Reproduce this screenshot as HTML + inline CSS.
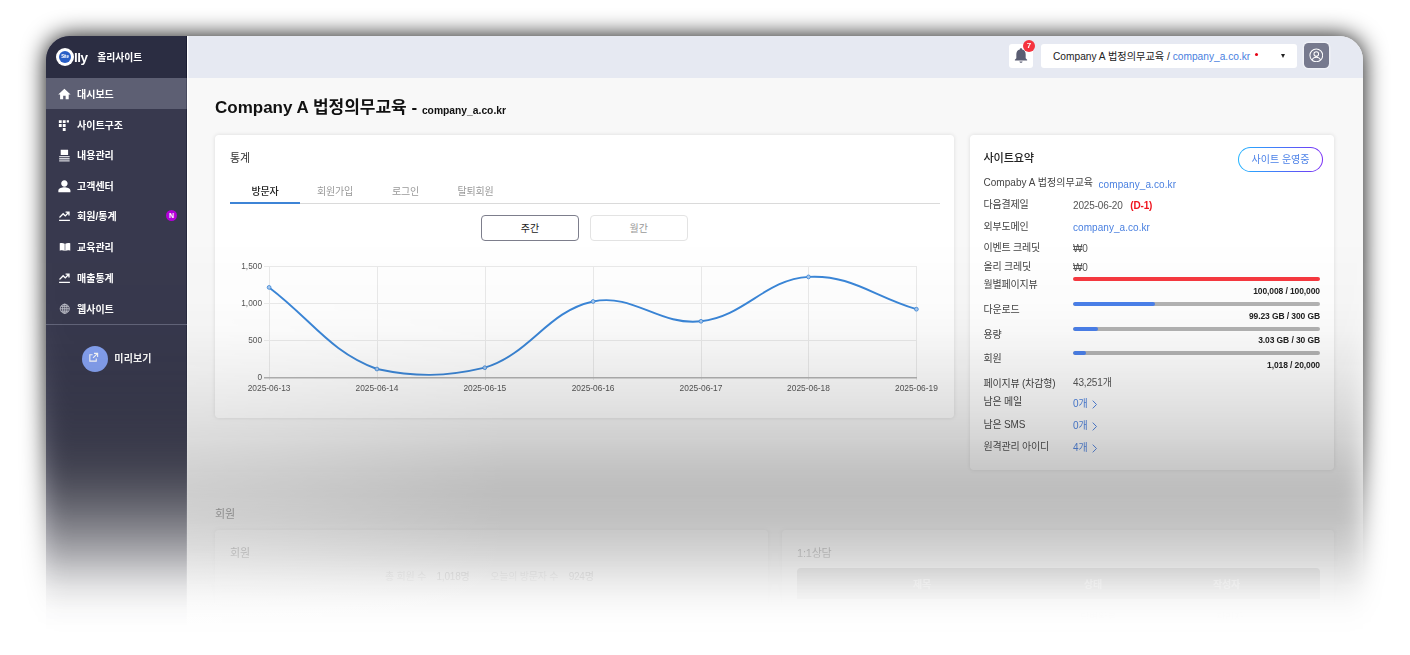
<!DOCTYPE html>
<html lang="ko">
<head>
<meta charset="utf-8">
<title>올리사이트 대시보드</title>
<style>
*{box-sizing:border-box;margin:0;padding:0}
html,body{width:1410px;height:655px;overflow:hidden;background:#fff}
body{position:relative;font-family:"Liberation Sans","Noto Sans CJK KR",sans-serif;color:#222;-webkit-font-smoothing:antialiased}
.abs{position:absolute}
#frame{position:absolute;left:46px;top:36px;width:1317px;height:700px;border-radius:24px 24px 0 0;background:#f8f8f8}
#clip{position:absolute;left:0;top:0;width:1317px;height:700px;border-radius:24px 24px 0 0;overflow:hidden}
/* sidebar */
#side{position:absolute;z-index:2;left:0;top:0;width:141px;box-shadow:inset -1px 0 0 rgba(10,12,35,.35);height:700px;background:#38394e}
#logo{position:absolute;left:0;top:0;width:141px;box-shadow:inset -1px 0 0 rgba(10,12,35,.5);height:42px;background:#2b2d42}
.mi{position:absolute;left:0;width:141px;height:31px;color:#fff;font-weight:700;font-size:10px;line-height:31px;white-space:nowrap}
.mi.on{background:#5d5f73;box-shadow:inset -1px 0 0 rgba(10,12,35,.25)}
.mi span{position:absolute;left:31px;top:.5px}
.mi svg{position:absolute;left:11px;top:8.600px;width:14.800px;height:14.800px;fill:#fff}
/* header */
#head{position:absolute;left:140px;top:0;width:1177px;height:42px;background:#e6e9f2;box-shadow:inset 2.300px 0 0 #fff}
/* content */
#main{position:absolute;left:140px;top:42px;width:1177px;height:658px;background:#f8f8f8;box-shadow:inset 2.300px 0 0 #fff}
.card{position:absolute;background:#fff;border-radius:4px;box-shadow:0 0 4px rgba(0,0,0,.12)}
.lbl{position:absolute;font-size:10px;letter-spacing:-.2px;color:#444;white-space:nowrap;line-height:14px;margin-top:.6px}
.val{position:absolute;font-size:10px;letter-spacing:-.15px;color:#555;white-space:nowrap;line-height:14px;margin-top:.3px}
.val.blue{font-size:10px;letter-spacing:.05px;margin-top:.8px}
.blue{color:#4a80e0}
.bar{position:absolute;left:1073px;width:247px;height:4px;border-radius:2px;background:#b3b3b3;overflow:hidden;margin-top:-.4px}
.bar i{position:absolute;left:0;top:0;height:4px;border-radius:2px;background:#4a80ea}
.num{position:absolute;right:90px;font-size:8.5px;font-weight:700;color:#222;white-space:nowrap;line-height:10px;margin-top:-.9px;letter-spacing:-.1px}
.tab{position:absolute;top:183.500px;width:70px;text-align:center;font-size:10px;letter-spacing:-.2px;color:#999;line-height:16px}

.fademask{-webkit-mask-image:linear-gradient(to bottom,rgba(0,0,0,1) 240px,rgba(0,0,0,0.992) 270px,rgba(0,0,0,0.99) 300px,rgba(0,0,0,0.972) 330px,rgba(0,0,0,0.925) 367px,rgba(0,0,0,0.87) 400px,rgba(0,0,0,0.83) 420px,rgba(0,0,0,0.78) 440px,rgba(0,0,0,0.68) 465px,rgba(0,0,0,0.54) 490px,rgba(0,0,0,0.38) 520px,rgba(0,0,0,0.24) 548px,rgba(0,0,0,0.13) 570px,rgba(0,0,0,0.05) 590px,rgba(0,0,0,0.012) 610px,rgba(0,0,0,0) 628px);mask-image:linear-gradient(to bottom,rgba(0,0,0,1) 240px,rgba(0,0,0,0.992) 270px,rgba(0,0,0,0.99) 300px,rgba(0,0,0,0.972) 330px,rgba(0,0,0,0.925) 367px,rgba(0,0,0,0.87) 400px,rgba(0,0,0,0.83) 420px,rgba(0,0,0,0.78) 440px,rgba(0,0,0,0.68) 465px,rgba(0,0,0,0.54) 490px,rgba(0,0,0,0.38) 520px,rgba(0,0,0,0.24) 548px,rgba(0,0,0,0.13) 570px,rgba(0,0,0,0.05) 590px,rgba(0,0,0,0.012) 610px,rgba(0,0,0,0) 628px);-webkit-mask-size:100% 655px;mask-size:100% 655px;-webkit-mask-repeat:no-repeat;mask-repeat:no-repeat}
#shadow{position:absolute;left:-60px;top:-60px;width:1530px;height:775px;filter:blur(11.5px)}
#shadow i{position:absolute;left:0;top:0;width:1530px;height:775px;-webkit-mask-position:0 60px;mask-position:0 60px}
#shadow b{position:absolute;left:106px;top:96px;width:1317px;height:660px;border-radius:24px 24px 0 0;background:rgba(0,0,0,.96)}
#screen{position:absolute;left:0;top:0;width:1410px;height:655px}
svg text{font-family:"Liberation Sans","Noto Sans CJK KR",sans-serif}
</style>
</head>
<body>
<div id="shadow"><i class="fademask"><b></b></i></div>
<div class="abs" id="lighten" style="left:186px;top:200px;width:330px;height:455px;background:linear-gradient(to right,rgba(255,255,255,.28),rgba(255,255,255,.2) 100px,rgba(255,255,255,.09) 220px,rgba(255,255,255,0) 320px)"></div>
<div id="screen" class="fademask">
<div id="frame"><div id="clip">

<!-- SIDEBAR -->
<div id="side">
  <div id="logo">
    <div class="abs" style="left:10px;top:11.500px;width:18px;height:18px;border-radius:50%;background:#fff"></div>
    <div class="abs" style="left:13px;top:14.500px;width:12px;height:12px;border-radius:50%;background:#2a5fc6;color:#fff;font-size:4.500px;font-weight:700;line-height:12px;text-align:center;letter-spacing:-.2px">Site</div>
    <div class="abs" style="left:28px;top:14.700px;color:#fff;font-weight:700;font-size:13.500px;line-height:13.500px;letter-spacing:-.5px">lly</div>
    <div class="abs" style="left:51.200px;top:13.500px;color:#fff;font-weight:700;font-size:9.800px;line-height:16px;white-space:nowrap">올리사이트</div>
  </div>
  <div class="mi on" style="top:42px"><svg viewBox="0 0 24 24"><path d="M10 20v-6h4v6h5v-8h3L12 3 2 12h3v8z"/></svg><span>대시보드</span></div>
  <div class="mi" style="top:73px"><svg viewBox="0 0 24 24"><path d="M3 3.500h4.600v4.600H3zM9.400 3.500h4.600v4.600H9.400zM15.800 3.500h3.600v3.600h-3.600zM3 9.900h4.600v4.600H3zM9.400 9.900h4.600v4.600H9.400zM9.400 16.300h4.600v4.600H9.400z"/></svg><span>사이트구조</span></div>
  <div class="mi" style="top:103px"><svg viewBox="0 0 24 24"><path d="M6 3h12v8.500H6z"/><path d="M3.500 13h17v2.200h-17zM3.500 16.400h17v2.200h-17zM3.500 19.800h17V22h-17z" fill="#d4d5dc"/></svg><span>내용관리</span></div>
  <div class="mi" style="top:134px"><svg viewBox="0 0 24 24"><path d="M12 12.500c3 0 5.200-2.400 5.200-5.300S15 2 12 2 6.800 4.300 6.800 7.200 9 12.500 12 12.500zm0 .8c-3.700 0-9.800 1.700-9.800 5.400V21.500h19.600v-2.800c0-3.700-6.100-5.400-9.800-5.400z"/></svg><span>고객센터</span></div>
  <div class="mi" style="top:164px"><svg viewBox="0 0 24 24" style="width:13px;height:13px;left:12px;top:9px"><path d="M2 20h20v2.200H2zM3.500 16.500l6-6 4 4L19 8.800V12h2.500V4.500H14V7h3.200l-3.700 4-4-4L2 14.800z"/></svg><span>회원/통계</span>
    <div class="abs" style="left:120px;top:10px;width:11px;height:11px;border-radius:50%;background:#b300d9;color:#fff;font-size:7px;line-height:11px;text-align:center;font-weight:700">N</div></div>
  <div class="mi" style="top:195px"><svg viewBox="0 0 24 24" style="width:12px;height:12px;left:12.500px;top:9.500px"><path d="M1.500 4.500c3.500-1.200 7-1 9.900.9v14.800C8.500 18.400 5 18.200 1.500 19.400zM22.500 4.500c-3.500-1.200-7-1-9.900.9v14.800c2.900-1.800 6.400-2 9.900-.8z"/></svg><span>교육관리</span></div>
  <div class="mi" style="top:226px"><svg viewBox="0 0 24 24" style="width:13px;height:13px;left:12px;top:9px"><path d="M2 20h20v2.200H2zM3.500 16.500l6-6 4 4L19 8.800V12h2.500V4.500H14V7h3.200l-3.700 4-4-4L2 14.800z"/></svg><span>매출통계</span></div>
  <div class="mi" style="top:257px"><svg viewBox="0 0 24 24" style="fill:none;stroke:#c9cad3;stroke-width:1.700;width:11.500px;height:11.500px;left:12.700px;top:10px"><circle cx="12" cy="12" r="9.500"/><ellipse cx="12" cy="12" rx="4.500" ry="9.500"/><path d="M2.500 12h19M4 7h16M4 17h16M12 2.500v19"/></svg><span>웹사이트</span></div>
  <div class="abs" style="left:0;top:288px;width:141px;height:1px;background:#62647a"></div>
  <div class="abs" style="left:35.700px;top:310px;width:26px;height:26px;border-radius:50%;background:#86a3f4"></div>
  <svg class="abs" style="left:42.300px;top:316.400px;width:11px;height:11px" viewBox="0 0 24 24" fill="none" stroke="#fff" stroke-width="2.400"><path d="M18 14v6H4V6h6M13 3h8v8M21 3l-10 10"/></svg>
  <div class="abs" style="left:68.300px;top:314px;color:#fff;font-weight:700;font-size:10px;letter-spacing:.15px;line-height:18px;white-space:nowrap">미리보기</div>
</div>

<!-- HEADER -->
<div id="head">
  <div class="abs" style="left:823px;top:8px;width:24px;height:24px;border-radius:3px;background:#fff"></div>
  <svg class="abs" style="left:827px;top:11px;width:16px;height:17px" viewBox="0 0 24 24" fill="#5a5d72"><path d="M12 23c1.200 0 2.200-.8 2.400-2H9.600c.2 1.200 1.200 2 2.400 2zM19 16v-6c0-3.400-2-6.200-5.200-6.900V2.500C13.800 1.600 13 1 12 1s-1.800.6-1.800 1.500v.6C7 3.800 5 6.600 5 10v6l-2.200 2.200V19.500h18.400v-1.300z"/></svg>
  <div class="abs" style="left:837px;top:4px;width:12px;height:12px;border-radius:50%;background:#f5333f;color:#fff;font-size:8px;font-weight:700;line-height:12px;text-align:center">7</div>
  <div class="abs" style="left:855px;top:8px;width:256px;height:24px;border-radius:3px;background:#fff"></div>
  <div class="abs" style="left:867px;top:13.600px;font-size:10.200px;line-height:14px;color:#222;white-space:nowrap"><span id="selt">Company A 법정의무교육 / </span><span class="blue" id="seld">company_a.co.kr</span></div>
  <div class="abs" style="left:1069px;top:16.700px;width:3px;height:3px;border-radius:50%;background:#e60012"></div>
  <div class="abs" style="left:1095.300px;top:18.300px;width:0;height:0;border-left:2.300px solid transparent;border-right:2.300px solid transparent;border-top:4px solid #222"></div>
  <div class="abs" style="left:1118px;top:7px;width:25px;height:25px;border-radius:4.500px;background:#777a8e;box-shadow:0 0 0 1.500px rgba(255,255,255,.4)"></div>
  <svg class="abs" style="left:1122.800px;top:11.900px;width:14.600px;height:14.600px" viewBox="0 0 24 24" fill="none" stroke="#fff" stroke-width="1.700"><circle cx="12" cy="12" r="10.500"/><circle cx="12" cy="10" r="3.800"/><path d="M5 19.500c1.500-3.200 4-4.300 7-4.300s5.500 1.100 7 4.300"/></svg>
</div>

<!-- MAIN -->
<div id="main"></div>

</div></div>

<!-- content positioned in page coordinates -->
<div id="content" class="abs" style="left:0;top:0;width:1410px;height:655px">
  <div class="abs" id="title" style="left:215px;top:94.300px;font-weight:700;font-size:17px;line-height:28px;color:#111;white-space:nowrap"><span id="t1">Company A 법정의무교육 -</span> <span id="t2" style="font-size:10.300px;position:relative;top:.6px">company_a.co.kr</span></div>

  <!-- stats card -->
  <div class="card" style="left:215px;top:135px;width:739px;height:283px"></div>
  <div class="lbl" style="left:230px;top:150px;font-size:11px;color:#333">통계</div>
  <div class="abs" style="left:230px;top:202.800px;width:710px;height:1.300px;background:#dadada"></div>
  <div class="abs" style="left:230px;top:202.200px;width:70px;height:1.800px;background:#3d84d6"></div>
  <div class="tab" style="left:230px;color:#222;font-weight:500">방문자</div>
  <div class="tab" style="left:300px">회원가입</div>
  <div class="tab" style="left:370.500px">로그인</div>
  <div class="tab" style="left:440.500px">탈퇴회원</div>
  <div class="abs" style="left:481px;top:215px;width:98px;height:25.500px;border:1px solid #7d7e8c;border-radius:4px;background:#fff;text-align:center;font-size:10px;line-height:25px;color:#222">주간</div>
  <div class="abs" style="left:589.500px;top:215px;width:98.500px;height:25.500px;border:1px solid #e3e3e3;border-radius:4px;background:#fff;text-align:center;font-size:10px;line-height:25px;color:#999">월간</div>

  <svg class="abs" style="left:0;top:0" width="1410" height="655" viewBox="0 0 1410 655">
    <g stroke="#eaeaea" stroke-width="1" shape-rendering="crispEdges">
      <path d="M264,266.500H916.500M264,303.500H916.500M264,340.500H916.500"/>
      <path d="M269.500,266V380M377,266V380M485,266V380M593,266V380M701,266V380M808.500,266V380M916.500,266V380"/>
    </g>
    <path d="M264,377.700H917" stroke="#b4b4b4" stroke-width="1.400" fill="none"/>
    <path d="M269.100,287.400 C312.200,320.000 328.900,351.100 376.900,369.000 C415.200,377.100 445.100,377.100 484.800,367.700 C531.500,353.100 546.700,311.500 593.100,301.500 C633.200,292.900 659.200,326.100 701.000,321.300 C745.300,316.200 764.700,279.400 808.500,276.900 C850.900,274.500 873.200,296.300 916.400,309.200" fill="none" stroke="#3a86d8" stroke-width="1.900"/>
    <g fill="#a9c8ee" stroke="#3a86d8" stroke-width=".8">
      <circle cx="269.100" cy="287.400" r="1.900"/><circle cx="376.900" cy="369" r="1.900"/><circle cx="484.800" cy="367.700" r="1.900"/><circle cx="593.100" cy="301.500" r="1.900"/><circle cx="701" cy="321.300" r="1.900"/><circle cx="808.500" cy="276.900" r="1.900"/><circle cx="916.400" cy="309.200" r="1.900"/>
    </g>
    <g font-size="8.300" fill="#555" text-anchor="end">
      <text x="262" y="268.600">1,500</text><text x="262" y="305.600">1,000</text><text x="262" y="342.800">500</text><text x="262" y="380">0</text>
    </g>
    <g font-size="8.400" fill="#555" text-anchor="middle">
      <text x="269.100" y="391">2025-06-13</text><text x="376.900" y="391">2025-06-14</text><text x="484.800" y="391">2025-06-15</text><text x="593.100" y="391">2025-06-16</text><text x="701" y="391">2025-06-17</text><text x="808.500" y="391">2025-06-18</text><text x="916.400" y="391">2025-06-19</text>
    </g>
  </svg>

  <!-- summary card -->
  <div class="card" style="left:970px;top:135px;width:364px;height:334.500px"></div>
  <div class="lbl" style="left:983.500px;top:150.500px;font-size:11.200px;font-weight:500;color:#222">사이트요약</div>
  <div class="abs" style="left:1238px;top:146.500px;width:85px;height:25.500px;border-radius:13px;background:linear-gradient(90deg,#22b4ff,#4a70f8 55%,#7c2ff6)"></div>
  <div class="abs" style="left:1239.300px;top:147.800px;width:82.400px;height:22.900px;border-radius:12px;background:#fff;text-align:center;font-size:10px;line-height:24px;color:#4a80e8">사이트 운영중</div>

  <div class="lbl" style="left:983.500px;top:175.500px;letter-spacing:.03px">Compaby A 법정의무교육</div><div class="val blue" style="left:1098.500px;top:177px;font-size:10px;letter-spacing:.1px">company_a.co.kr</div>
  <div class="lbl" style="left:983.500px;top:197.500px">다음결제일</div><div class="val" style="left:1073px;top:198.500px">2025-06-20 <span style="color:#f0141e;font-weight:700;margin-left:5px">(D-1)</span></div>
  <div class="lbl" style="left:983.500px;top:219.500px">외부도메인</div><div class="val blue" style="left:1073px;top:220.500px">company_a.co.kr</div>
  <div class="lbl" style="left:983.500px;top:240.500px">이벤트 크레딧</div><div class="val" style="left:1073px;top:241.500px">₩0</div>
  <div class="lbl" style="left:983.500px;top:259.500px">올리 크레딧</div><div class="val" style="left:1073px;top:260.500px">₩0</div>

  <div class="lbl" style="left:983.500px;top:277.500px">월별페이지뷰</div><div class="bar" style="top:277.500px;background:#f6383f"></div><div class="num" style="top:286.500px">100,008 / 100,000</div>
  <div class="lbl" style="left:983.500px;top:302px">다운로드</div><div class="bar" style="top:302.500px"><i style="width:81.500px"></i></div><div class="num" style="top:311.500px">99.23 GB / 300 GB</div>
  <div class="lbl" style="left:983.500px;top:327px">용량</div><div class="bar" style="top:327px"><i style="width:24.700px"></i></div><div class="num" style="top:336px">3.03 GB / 30 GB</div>
  <div class="lbl" style="left:983.500px;top:351px">회원</div><div class="bar" style="top:351.500px"><i style="width:12.700px"></i></div><div class="num" style="top:360.500px">1,018 / 20,000</div>

  <div class="lbl" style="left:983.500px;top:376px">페이지뷰 (차감형)</div><div class="val" style="left:1073px;top:376px">43,251개</div>
  <div class="lbl" style="left:983.500px;top:394.500px">남은 메일</div><div class="val blue" style="left:1073px;top:396px">0개 <svg class="chev" viewBox="0 0 6 10" width="5.400" height="9" style="margin-left:1.500px;vertical-align:-1.800px" fill="none" stroke="#4a80e0" stroke-width="1.100"><path d="M.8.700 5 5 .8 9.300"/></svg></div>
  <div class="lbl" style="left:983.500px;top:417px">남은 SMS</div><div class="val blue" style="left:1073px;top:418.500px">0개 <svg class="chev" viewBox="0 0 6 10" width="5.400" height="9" style="margin-left:1.500px;vertical-align:-1.800px" fill="none" stroke="#4a80e0" stroke-width="1.100"><path d="M.8.700 5 5 .8 9.300"/></svg></div>
  <div class="lbl" style="left:983.500px;top:439px">원격관리 아이디</div><div class="val blue" style="left:1073px;top:440.500px">4개 <svg class="chev" viewBox="0 0 6 10" width="5.400" height="9" style="margin-left:1.500px;vertical-align:-1.800px" fill="none" stroke="#4a80e0" stroke-width="1.100"><path d="M.8.700 5 5 .8 9.300"/></svg></div>

  <!-- lower section -->
  <div class="lbl" style="left:215px;top:506px;font-size:11px;color:#555">회원</div>
  <div class="card" style="left:215px;top:530px;width:553px;height:160px"></div>
  <div class="lbl" style="left:230px;top:545px;font-size:11px;color:#555">회원</div>
  <div class="lbl" style="left:385px;top:569px;font-size:10px;color:#999">총 회원 수 &nbsp;&nbsp;&nbsp;<span style="color:#555">1,018명</span> &nbsp;&nbsp;&nbsp;&nbsp;&nbsp;&nbsp; 오늘의 방문자 수 &nbsp;&nbsp;&nbsp;<span style="color:#555">924명</span></div>
  <div class="card" style="left:782px;top:530px;width:552px;height:160px"></div>
  <div class="lbl" style="left:797px;top:545px;font-size:11px;color:#555">1:1상담</div>
  <div class="abs" style="left:797px;top:568px;width:523px;height:31px;border-radius:4px 4px 0 0;background:#9a9a9a"></div>
  <div class="lbl" style="left:913px;top:577px;font-size:10px;color:#fff;font-weight:700">제목</div>
  <div class="lbl" style="left:1084px;top:577px;font-size:10px;color:#fff;font-weight:700">상태</div>
  <div class="lbl" style="left:1213px;top:577px;font-size:10px;color:#fff;font-weight:700">작성자</div>
  <div class="abs" style="left:797px;top:599px;width:523px;height:34px;background:#fff"></div>
  <div class="lbl" style="left:1080px;top:610px;font-size:10px;color:#888">답변완료</div>
  <div class="lbl" style="left:1216px;top:610px;font-size:10px;color:#888">관리자</div>
</div>

</div>
</body>
</html>
